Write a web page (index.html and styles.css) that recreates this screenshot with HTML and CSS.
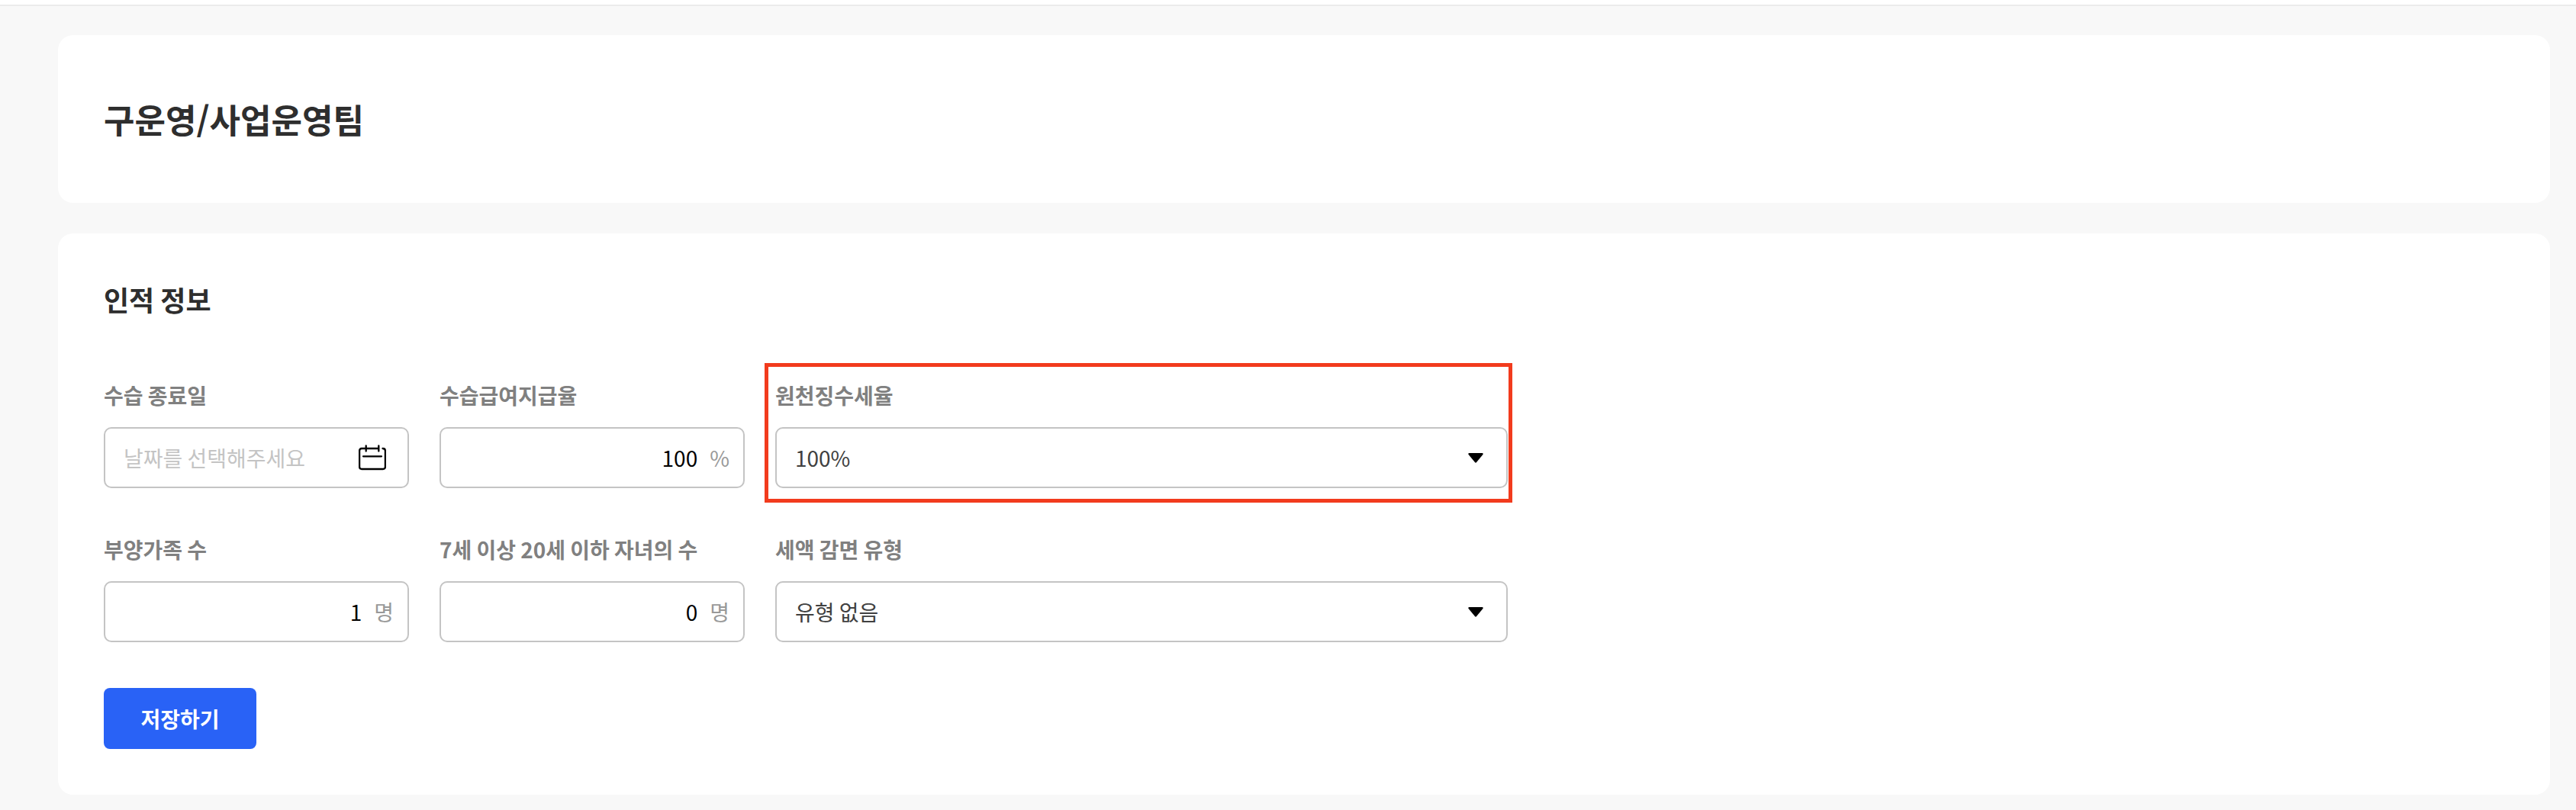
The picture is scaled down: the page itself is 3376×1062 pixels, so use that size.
FILE: index.html
```html
<!DOCTYPE html>
<html lang="ko">
<head>
<meta charset="utf-8">
<title>구운영/사업운영팀</title>
<link rel="stylesheet" href="styles.css">
</head>
<body>
<header class="topbar"></header>
<main class="page">
  <section class="card card-title">
    <h1 class="title">구운영/사업운영팀</h1>
  </section>
  <section class="card">
    <h2 class="subtitle">인적 정보</h2>
    <form class="form">
      <div class="field">
        <label class="label">수습 종료일</label>
        <div class="control control-date">
          <span class="placeholder">날짜를 선택해주세요</span>
          <svg class="calendar" viewBox="0 0 36 34" fill="none" stroke="#000" stroke-width="2.3" stroke-linecap="round" stroke-linejoin="round">
            <path d="M26 5H4Q1.1 5 1.1 8V29Q1.1 32 4 32H32Q34.9 32 34.9 29V8Q34.9 5 31.5 5"/>
            <path d="M9.7 1.5V8.5M26.3 1.5V8.5M6 15.3H30"/>
          </svg>
        </div>
      </div>
      <div class="field">
        <label class="label">수습급여지급율</label>
        <div class="control control-number"><span class="number">100</span><span class="unit">%</span></div>
      </div>
      <div class="field field-highlight">
        <label class="label">원천징수세율</label>
        <div class="control control-select">
          <span>100%</span>
          <svg class="caret" viewBox="0 -.7 20 14"><path d="M1.5 .2H18.5Q20.3 .5 19.4 2.3L11.1 12.4Q10 13.6 8.9 12.4L.6 2.3Q-.3 .5 1.5 .2Z"/></svg>
        </div>
      </div>
      <div class="field">
        <label class="label">부양가족 수</label>
        <div class="control control-number"><span class="number">1</span><span class="unit">명</span></div>
      </div>
      <div class="field">
        <label class="label">7세 이상 20세 이하 자녀의 수</label>
        <div class="control control-number"><span class="number">0</span><span class="unit">명</span></div>
      </div>
      <div class="field">
        <label class="label">세액 감면 유형</label>
        <div class="control control-select">
          <span>유형 없음</span>
          <svg class="caret" viewBox="0 -.7 20 14"><path d="M1.5 .2H18.5Q20.3 .5 19.4 2.3L11.1 12.4Q10 13.6 8.9 12.4L.6 2.3Q-.3 .5 1.5 .2Z"/></svg>
        </div>
      </div>
    </form>
    <button class="save" type="button">저장하기</button>
  </section>
</main>
</body>
</html>
```
FILE: styles.css
```css
* {
  box-sizing: border-box;
}

body {
  margin: 0;
  min-height: 1062px;
  background: #f8f8f8;
  color: #2e2e2e;
  font-family: "Noto Sans CJK KR", "Noto Sans", sans-serif;
  font-size: 28px;
  line-height: 40px;
  word-spacing: -1.6px;
}

.topbar {
  height: 8px;
  background: #fff;
  border-bottom: 2px solid #ebebeb;
}

.page {
  display: flex;
  flex-direction: column;
  gap: 40px;
  padding: 38px 34px 20px 76px;
}

.card {
  padding: 60px;
  border-radius: 20px;
  background: #fff;
}

.card-title {
  display: flex;
  align-items: center;
  height: 220px;
}

.title {
  margin: 0;
  font-size: 44px;
  line-height: 64px;
  font-weight: 700;
}

.subtitle {
  margin: 0 0 80px;
  font-size: 36px;
  line-height: 52px;
  font-weight: 700;
  word-spacing: -2px;
}

.form {
  display: grid;
  grid-template-columns: 400px 400px 960px;
  gap: 60px 40px;
  margin-bottom: 60px;
}

.field {
  position: relative;
  display: flex;
  flex-direction: column;
  gap: 22px;
}

.field-highlight::after {
  content: "";
  position: absolute;
  inset: -22px -6px -19px -14px;
  border: 5px solid #f23b1d;
  pointer-events: none;
}

.label {
  color: #808080;
  font-weight: 700;
}

.control {
  display: flex;
  align-items: center;
  height: 80px;
  border: 2px solid #c4c4c4;
  border-radius: 10px;
}

.control-date {
  justify-content: space-between;
  padding: 0 28px 0 24px;
}

.placeholder {
  color: #c4c4c4;
}

.calendar {
  width: 36px;
  height: 34px;
}

.control-number {
  justify-content: flex-end;
  gap: 16px;
  padding-right: 18px;
}

.number {
  color: #000;
}

.unit {
  color: #999;
}

.control-select {
  justify-content: space-between;
  padding: 0 30px 0 24px;
  color: #404040;
}

.caret {
  width: 20px;
  height: 14px;
}

.save {
  display: block;
  width: 200px;
  height: 80px;
  padding: 0;
  border: 0;
  border-radius: 8px;
  background: #2962f6;
  color: #fff;
  font: inherit;
  font-weight: 700;
}
```
